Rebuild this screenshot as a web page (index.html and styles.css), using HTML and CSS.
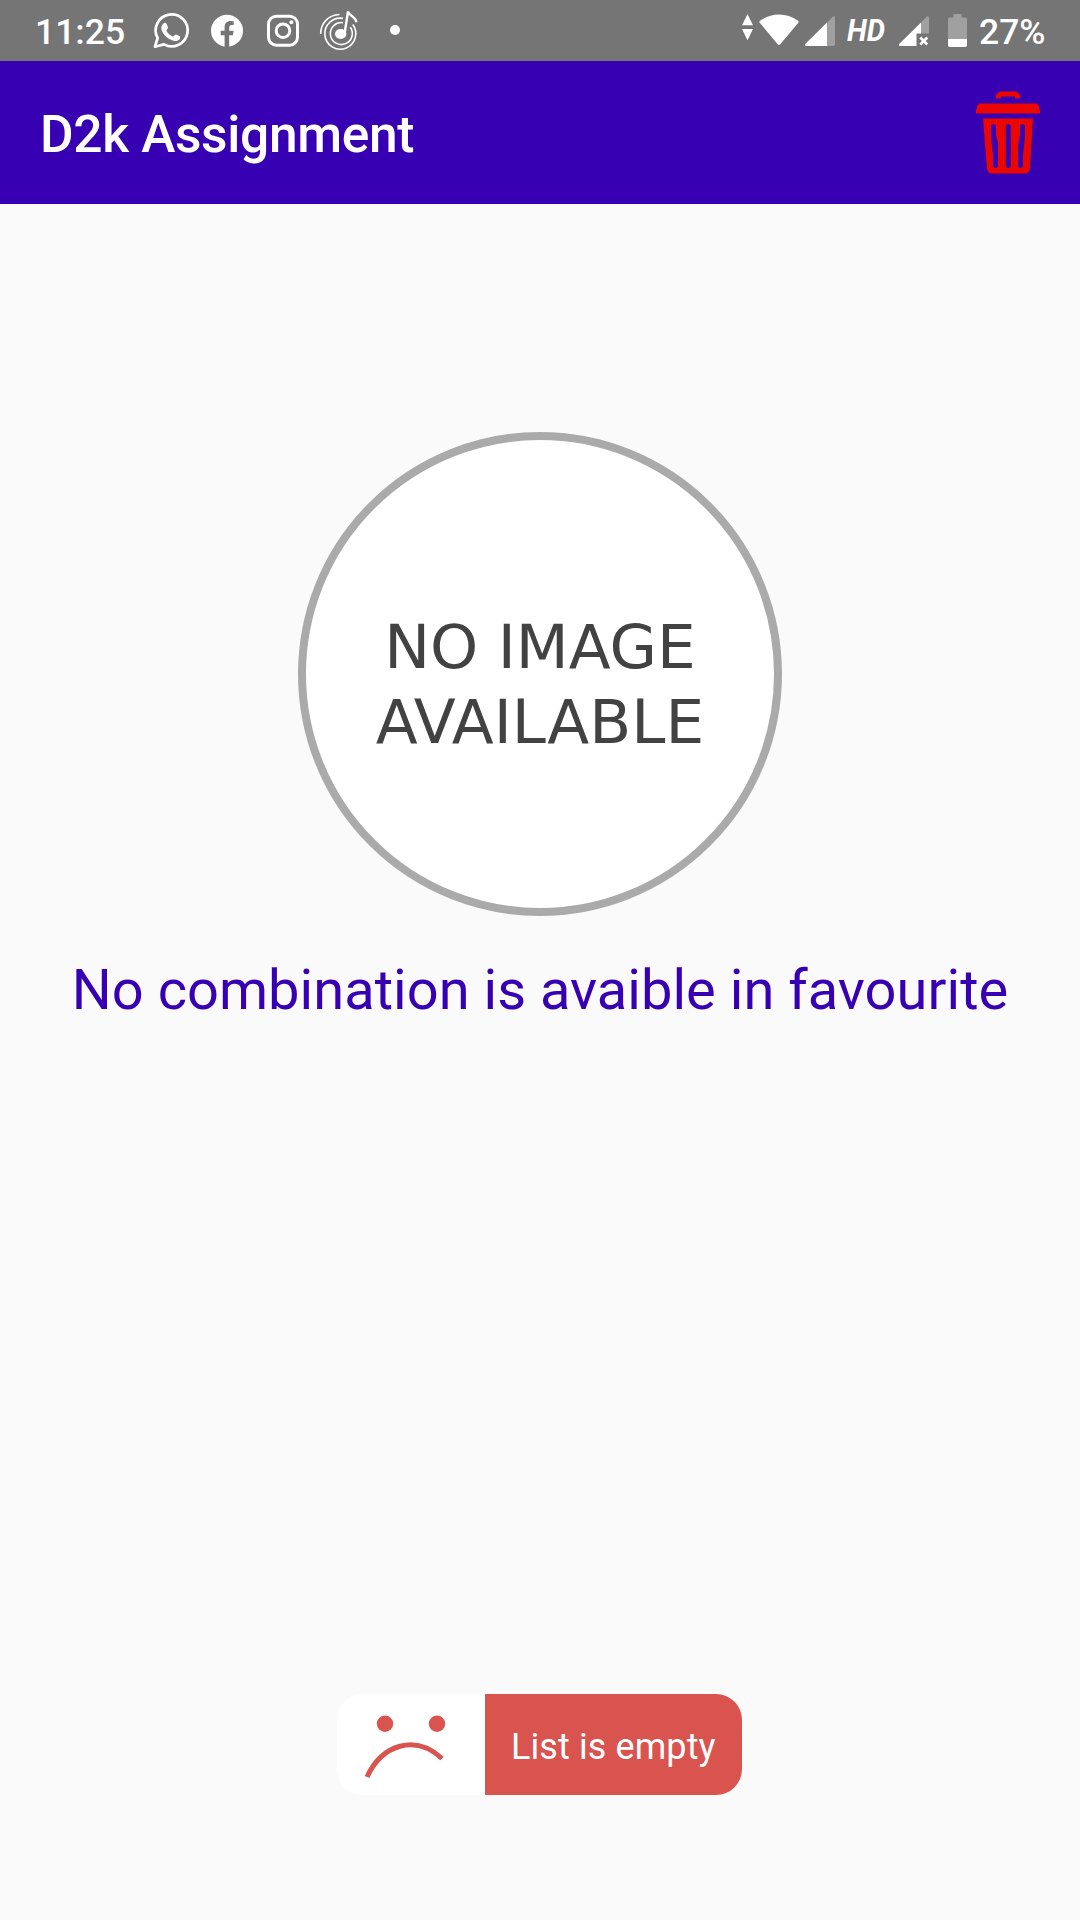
FILE: index.html
```html
<!DOCTYPE html>
<html lang="en">
<head>
<meta charset="utf-8">
<title>D2k Assignment</title>
<link rel="stylesheet" href="styles.css">
</head>
<body>
<header class="status-bar">
  <span class="clock">11:25</span>
  <div class="notifications">
    <svg class="icon" width="42" height="61" viewBox="150 0 42 61"><path d="M155 46.7 157.6 38A16 16 0 1 1 164 44.4Z" fill="none" stroke="#fff" stroke-width="2.7" stroke-linejoin="round"/><path d="M163.5 23.5c1.2-1 2.5-.8 3 .3l1.5 3.5c.4 1.2-1.9 2.7-1.5 3.5 1.5 2.7 3.6 4.6 6.4 5.6 1 .3 2.2-2.4 3.3-1.9l3.5 1.7c1.1.6.5 2.5-.6 3.6-2.2 2-5.2 1.5-8.7-.2-4.1-2-8.1-6.2-9-10.6-.4-2.2.5-4.2 2.1-5.5Z" fill="#fff"/></svg>
    <svg class="icon" width="38" height="61" viewBox="208 0 38 61"><circle cx="227" cy="30.7" r="16" fill="#fff"/><path d="M224.6 47V35.2H220.7V30.7h3.9v-3.5c0-4 2.4-6.2 6-6.2 1.5 0 3.1.3 3.1.3v3.7h-2c-1.9 0-2.5 1.2-2.5 2.4v3.3h4.4l-.7 4.5h-3.7V47Z" fill="#757575"/></svg>
    <svg class="icon" width="38" height="61" viewBox="264 0 38 61"><rect x="268.5" y="16.2" width="29" height="29" rx="8" fill="none" stroke="#fff" stroke-width="3"/><circle cx="283" cy="30.7" r="6.8" fill="none" stroke="#fff" stroke-width="3"/><circle cx="291.4" cy="22.3" r="2" fill="#fff"/></svg>
    <svg class="icon" width="44" height="61" viewBox="317 0 44 61"><g fill="none" stroke="#fff" stroke-width="1.6"><path d="M343 18.4A15.5 15.5 0 1 0 352.8 24.5"/><path d="M343 22.7A11 11 0 1 0 350.3 27.2"/><path d="M320.7 34C320.5 23.5 328.5 14.8 339.5 14.5"/></g><ellipse cx="340.7" cy="34" rx="5.7" ry="5" fill="#fff"/><path d="M344.5 34 348 11.5c.7 4.5 8 4.8 8.3 10.8" fill="none" stroke="#fff" stroke-width="2.4"/></svg>
    <svg class="icon" width="18" height="61" viewBox="386 0 18 61"><circle cx="395" cy="30" r="5" fill="#fff"/></svg>
  </div>
  <div class="system">
    <svg class="icon" width="98" height="61" viewBox="740 0 98 61"><path d="M742 25.3 747.5 14l5.5 11.3ZM742 29h11l-5.5 11.3Z" fill="#fff"/><path d="M760 20.7c12-8.3 26.5-8.3 38 0 .8.6.9 1.3.3 2L780.3 44.2q-1.3 1.5-2.6 0L759.7 22.7c-.6-.7-.5-1.4.3-2Z" fill="#fff"/><path d="M827 22.5 833 16.5q2-1 2 1V44q0 2-2 2h-6Z" fill="#a0a0a0"/><path d="M827 22.5V46H806q-2-.5-.8-2Z" fill="#fff"/></svg>
    <span class="hd">HD</span>
    <svg class="icon" width="34" height="61" viewBox="897 0 34 61"><path d="M921 22.5 927 16.5q2-1 2 1V33.5h-8Z" fill="#a0a0a0"/><path d="M921 22.5V33.5h-4.5V46H900q-2-.5-.8-2Z" fill="#fff"/><path d="m920.3 37.5 7 7m0-7-7 7" stroke="#fff" stroke-width="2.6"/></svg>
    <svg class="icon battery" width="22" height="61" viewBox="947 0 22 61"><path d="M948 39V19q0-1.5 1.5-1.5h4V14h8v3.5h4q1.5 0 1.5 1.5V39Z" fill="#a0a0a0"/><path d="M948 39h19v6.2q0 1.8-1.8 1.8h-15.4q-1.8 0-1.8-1.8Z" fill="#fff"/></svg>
    <span class="percent">27%</span>
  </div>
</header>
<div class="app-bar">
  <h1 class="title">D2k Assignment</h1>
  <svg class="trash" width="64" height="88" viewBox="976 88.5 64 88"><g fill="#eb0700"><path d="M996 98v-3q0-1 1-1.8l1.5-1.5q.8-.7 2-.7h15q1.2 0 2 .7l1.5 1.5q1 .8 1 1.8v3h-5v-2h-14v2ZM979 103h58l1.6 2.5 1.4 5V113H976v-3l1.5-5Z"/><path fill-rule="evenodd" d="M983 118h50l-3 50q-.5 3.5-3.5 5h-36q-3-1-3.5-5ZM991 125v12l2 17v12q2.5 3 5 0V143l-2-9v-9q-2.5-3-5 0ZM1005.8 125v41q2.5 3 5 0V125q-2.5-3-5 0ZM1020 125v9l-2 11v21q2.5 3 5 0V154l2-17V125q-2.5-3-5 0Z"/></g></svg>
</div>
<main class="content">
  <div class="placeholder"><span>NO IMAGE</span><span>AVAILABLE</span></div>
  <p class="message">No combination is avaible in favourite</p>
  <div class="toast">
    <div class="face"><svg width="148" height="101" viewBox="337 1694 148 101"><g fill="#d9534f"><circle cx="385" cy="1723.7" r="8.2"/><circle cx="437" cy="1723.7" r="8.2"/></g><path d="M367 1777C382 1744.5 415 1733.7 442 1758.5" fill="none" stroke="#d9534f" stroke-width="5"/></svg></div>
    <div class="toast-text"><span>List is empty</span></div>
  </div>
</main>
</body>
</html>
```
FILE: styles.css
```css
* { box-sizing: border-box; }

body {
  margin: 0;
  height: 1920px;
  display: flex;
  flex-direction: column;
  background: #fafafa;
  font-family: Roboto, sans-serif;
}

.icon, .trash, .face svg { display: block; flex: none; }

.status-bar {
  height: 61px;
  flex: none;
  display: flex;
  align-items: center;
  padding: 0 35px;
  background: #757575;
  color: #fff;
  font-size: 35.5px;
  font-weight: 500;
}

.clock, .percent { padding-top: 3px; }

.clock { width: 115px; }

.notifications { display: flex; }
.notifications .icon { margin-right: 18px; }
.notifications .icon:nth-child(3) { margin-right: 15px; }
.notifications .icon:nth-child(1) { margin-right: 16px; }
.notifications .icon:nth-child(4) { margin-right: 25px; }

.system {
  display: flex;
  align-items: center;
  margin-left: auto;
}

.hd {
  width: 49px;
  margin: 0 1px 0 9px;
  font-size: 31.5px;
  font-style: italic;
  font-weight: 700;
  transform: scaleX(0.92);
  transform-origin: left center;
}

.battery { margin: 0 10px 0 16px; }

.percent { width: 66px; }

.app-bar {
  height: 143px;
  flex: none;
  display: flex;
  align-items: center;
  justify-content: space-between;
  padding: 0 40px;
  background: #3700b3;
}

.title {
  margin: 0;
  padding-top: 4px;
  color: #fff;
  font-size: 51.5px;
  font-weight: 500;
  letter-spacing: -0.35px;
}

.content {
  flex: 1;
  display: flex;
  flex-direction: column;
  align-items: center;
  padding: 228px 0 125px;
}

.placeholder {
  width: 484px;
  height: 484px;
  flex: none;
  display: flex;
  flex-direction: column;
  align-items: center;
  justify-content: center;
  padding-top: 19px;
  border: 8px solid #aaa;
  border-radius: 50%;
  background: #fff;
  color: #424242;
  font-family: "DejaVu Sans", sans-serif;
  font-size: 61.3px;
  line-height: 75px;
}

.message {
  margin: 41px 0 0;
  color: #3700b3;
  font-size: 56px;
  line-height: 66px;
  letter-spacing: 0.03px;
  white-space: nowrap;
}

.toast {
  width: 405px;
  height: 101px;
  flex: none;
  display: flex;
  margin: auto 1px 0 0;
  border-radius: 26px;
  overflow: hidden;
}

.face {
  width: 148px;
  background: #fff;
}

.toast-text {
  flex: 1;
  display: flex;
  align-items: center;
  padding: 4px 0 0 26px;
  background: #d9534f;
  color: #fff;
  font-size: 36px;
  letter-spacing: 0.1px;
  white-space: nowrap;
}
```
